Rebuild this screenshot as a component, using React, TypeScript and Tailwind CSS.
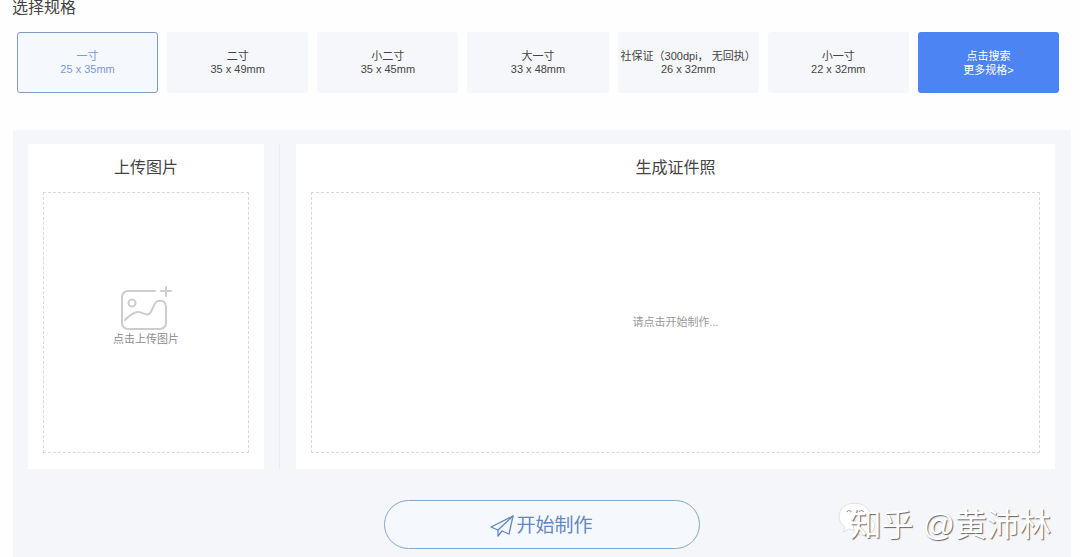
import clsx from "clsx"

const sizes = [
    { name: "一寸", size: "25 x 35mm" },
    { name: "二寸", size: "35 x 49mm" },
    { name: "小二寸", size: "35 x 45mm" },
    { name: "大一寸", size: "33 x 48mm" },
    { name: "社保证（300dpi， 无回执）", size: "26 x 32mm" },
    { name: "小一寸", size: "22 x 32mm" },
]

function UploadIcon() {
    return <svg className="w-13 h-11" viewBox="0 0 52 44" fill="none" stroke="#cdcdcd" strokeWidth="2" strokeLinecap="round" aria-hidden="true">
        <path d="M35 5H8a6 6 0 0 0-6 6v26a6 6 0 0 0 6 6h32a6 6 0 0 0 6-6V20" />
        <circle cx="12" cy="17" r="3.5" />
        <path d="M5 34c4-4 8-8 13-8 5 0 7 4 11 2 4-2 4-12 9-13 5-1 8 1 8 6" />
        <path d="M46 1v9M41 5h10" />
    </svg>
}

function PlaneIcon() {
    return <svg className="w-6 h-6" viewBox="0 0 24 24" fill="none" stroke="currentColor" strokeWidth="1.3" strokeLinejoin="round" strokeLinecap="round" aria-hidden="true">
        <path d="M8 15L1 12 23 1 19 19 12 16" />
        <path d="M23 1L8 15v6l4-5" />
    </svg>
}

function Watermark() {
    return <div className="absolute flex items-center pointer-events-none right-1 top-1/2 -translate-y-1/2">
        <svg className="absolute -left-3 -top-1 w-10 h-10" viewBox="0 0 36 36" aria-hidden="true">
            <path d="M15 2C7 2 1 7 1 14c0 4 2 7 5 9l-1 5 5-3c2 1 3 1 5 1 8 0 14-5 14-12S23 2 15 2z" fill="#fff" stroke="#d5d8dc" strokeWidth="0.7" />
            <path d="M8 10c1-2 3-2 4 0M19 10c1-2 3-2 4 0" fill="none" stroke="#999" />
            <path d="M24 14c-6 0-10 4-10 9s4 8 10 8l5 3-1-4c3-2 5-4 5-7 0-5-4-9-9-9z" fill="#fff" stroke="#d5d8dc" strokeWidth="0.7" />
        </svg>
        <span className="relative text-[32px] leading-10 text-white whitespace-nowrap [text-shadow:1px_1px_1px_#666]">知乎 @黄沛林</span>
    </div>
}

export default function App() {
    return <main className="min-h-screen overflow-hidden bg-[#fefefe] font-['Liberation_Sans','Noto_Sans_CJK_SC',sans-serif] text-[#444] flex flex-col">
        <h1 className="px-3 -mt-1 text-base leading-6">选择规格</h1>

        {/* sizes */}
        <section className="grid grid-cols-7 gap-[9px] pl-[17px] pr-[21px] mt-3">
            {sizes.map((item, i) => <button
                key={item.name}
                type="button"
                className={clsx(
                    "h-[61px] pt-px rounded-[3px] border text-[11px] leading-[13px] whitespace-nowrap flex flex-col items-center justify-center",
                    i === 0 ? "border-[#7f9dc4] bg-[#f5f8fc] text-[#7c9ad6]" : "border-transparent bg-[#f6f7fb]"
                )}
            >
                <span>{item.name}</span>
                <span>{item.size}</span>
            </button>)}
            <button type="button" className="h-[61px] pt-px rounded-[3px] bg-[#4c84f3] text-white text-[11px] leading-[14px] flex flex-col items-center justify-center">
                <span>点击搜索</span>
                <span>更多规格&gt;</span>
            </button>
        </section>

        <section className="flex-1 pl-[15px] pr-4 pt-3.5 pb-2 ml-[13px] mr-[9px] mt-[37px] bg-[#f4f6fa]">
            <div className="flex">
                {/* upload */}
                <div className="flex flex-col w-[236px] shrink-0 px-[15px] pb-4 bg-white">
                    <h2 className="text-base leading-12 text-center">上传图片</h2>
                    <button type="button" className="flex flex-col items-center justify-center gap-px h-[261px] pb-3 border border-dashed border-[#d9d9d9] text-[11px] leading-4 text-[#8c8c8c]">
                        <UploadIcon />
                        <span>点击上传图片</span>
                    </button>
                </div>
                <div className="w-px ml-[15px] mr-4 bg-[#e9ecf2]" />
                {/* result */}
                <div className="flex flex-col flex-1 px-[15px] pb-4 bg-white">
                    <h2 className="text-base leading-12 text-center">生成证件照</h2>
                    <div className="flex items-center justify-center h-[261px] border border-dashed border-[#d9d9d9] text-[11px] text-[#999]">
                        请点击开始制作...
                    </div>
                </div>
            </div>

            <div className="relative flex justify-center mt-[31px]">
                <button type="button" className="flex items-center justify-center gap-0.5 w-[316px] h-[49px] pt-1 border rounded-full border-[#86a5ca] bg-[#f5f8fc] text-[19px] text-[#6288c6]">
                    <PlaneIcon />
                    <span>开始制作</span>
                </button>
                <Watermark />
            </div>
        </section>
    </main>
}
